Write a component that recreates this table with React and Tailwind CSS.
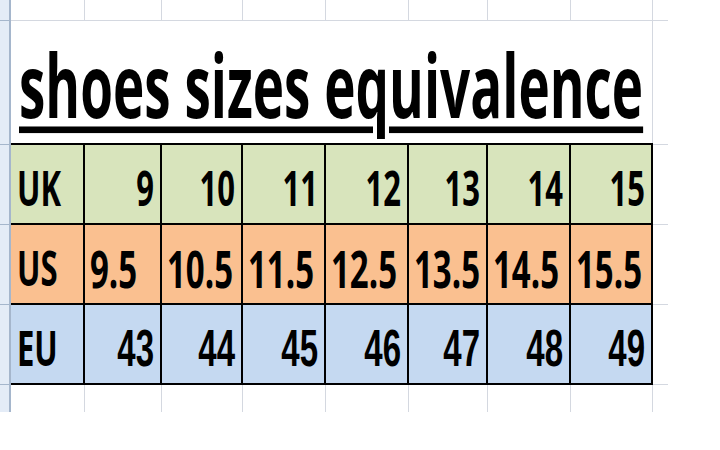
import React from "react";

const W = ["w-[74px]", "w-[77px]", "w-[81px]", "w-[83px]", "w-[83px]", "w-[79px]", "w-[83px]", "w-[82px]"];

const rows = [
  { bg: "bg-[#d8e4bc]", cells: ["UK", "9", "10", "11", "12", "13", "14", "15"], right: true, kind: "uk" },
  { bg: "bg-[#fac090]", cells: ["US", "9.5", "10.5", "11.5", "12.5", "13.5", "14.5", "15.5"], right: false, kind: "us" },
  { bg: "bg-[#c5d9f1]", cells: ["EU", "43", "44", "45", "46", "47", "48", "49"], right: true, kind: "eu" },
];

function GridRow({ h }) {
  return (
    <div className={`flex ${h}`}>
      {W.map((w, i) => (
        <div key={i} className={`${w} border-r border-[#d4d8e0]`} />
      ))}
      <div className="w-[15px]" />
    </div>
  );
}

function Cell({ w, text, right, first, kind }) {
  const align = first ? "justify-start pl-[6px]" : right ? "justify-end pr-[6px]" : "justify-start pl-[5px]";
  let font = "font-['Open_Sans',sans-serif] text-[31px]";
  if (kind === "eu" && !first) font = "font-['Liberation_Sans',sans-serif] text-[33px]";
  if (kind === "us" && !first) font = "font-['Open_Sans',sans-serif] text-[33px]";
  return (
    <div className={`${w} h-full border-r-2 border-black flex items-center pt-[8px] ${align}`}>
      <span className={`inline-block leading-none font-bold text-black scale-y-[1.55] ${font}`}>{text}</span>
    </div>
  );
}

export default function App() {
  return (
    <div className="w-[720px] h-[450px] bg-white flex items-start overflow-hidden">
      <div className="w-[11px] flex flex-col bg-[#e4ecf7] border-r-2 border-[#a5b6cc]">
        <div className="h-[21px] border-b border-[#a5b6cc]" />
        <div className="h-[124px] border-b border-[#a5b6cc]" />
        <div className="h-[80px] border-b border-[#a5b6cc]" />
        <div className="h-[80px] border-b border-[#a5b6cc]" />
        <div className="h-[80px] border-b border-[#a5b6cc]" />
        <div className="h-[27px]" />
      </div>
      <div className="w-[657px] flex flex-col">
        <div className="border-b border-[#d4d8e0]">
          <GridRow h="h-[20px]" />
        </div>
        <div className="flex h-[122px]">
          <div className="w-[642px] border-r border-[#d4d8e0] flex items-end pl-[8px] pb-[19px]">
            <span className="inline-block leading-none font-bold text-black font-['Open_Sans',sans-serif] text-[53px] scale-y-[1.65] origin-[50%_88%] underline decoration-[4px] underline-offset-[5px] whitespace-nowrap">
              shoes sizes equivalence
            </span>
          </div>
          <div className="w-[15px]" />
        </div>
        <div className="flex">
          <div className="w-[642px] border-t-2 border-black flex flex-col">
            {rows.map((r, ri) => (
              <div key={ri} className={`flex h-[80px] border-b-2 border-black ${r.bg}`}>
                {r.cells.map((c, ci) => (
                  <Cell key={ci} w={W[ci]} text={c} right={r.right} first={ci === 0} kind={r.kind} />
                ))}
              </div>
            ))}
          </div>
          <div className="w-[15px] flex flex-col">
            <div className="h-[2px] border-b border-[#d4d8e0]" />
            <div className="h-[80px] border-b border-[#d4d8e0]" />
            <div className="h-[80px] border-b border-[#d4d8e0]" />
            <div className="h-[80px] border-b border-[#d4d8e0]" />
          </div>
        </div>
        <GridRow h="h-[27px]" />
      </div>
    </div>
  );
}
